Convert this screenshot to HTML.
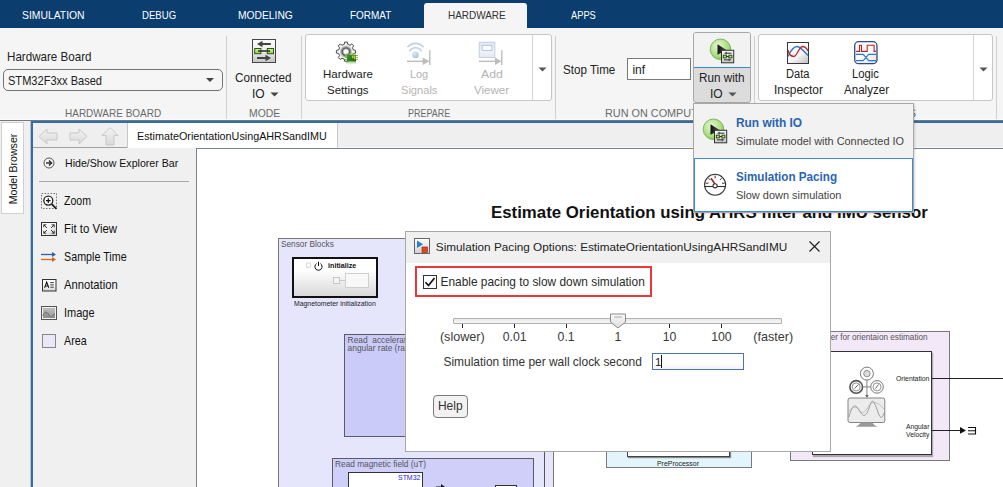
<!DOCTYPE html>
<html><head><meta charset="utf-8"><style>
html,body{margin:0;padding:0;width:1003px;height:487px;overflow:hidden;background:#fff;position:relative}
.a{position:absolute}
.t{position:absolute;white-space:nowrap;line-height:1;font-family:"Liberation Sans", sans-serif}
</style></head><body>
<div class="a" style="left:0px;top:0px;width:1003px;height:28px;background:#0b3d6f"></div>
<div class="a" style="left:424px;top:3px;width:103px;height:26px;background:#f5f5f5;border-radius:3px 3px 0 0"></div>
<div class="t" style="left:21.60px;top:10px;font-size:11.3px;color:#fff;font-weight:normal;transform:scaleX(0.9175);transform-origin:0 0;">SIMULATION</div>
<div class="t" style="left:141.90px;top:10px;font-size:11.3px;color:#fff;font-weight:normal;transform:scaleX(0.8486);transform-origin:0 0;">DEBUG</div>
<div class="t" style="left:237.60px;top:10px;font-size:11.3px;color:#fff;font-weight:normal;transform:scaleX(0.9092);transform-origin:0 0;">MODELING</div>
<div class="t" style="left:350.30px;top:10px;font-size:11.3px;color:#fff;font-weight:normal;transform:scaleX(0.8813);transform-origin:0 0;">FORMAT</div>
<div class="t" style="left:448.30px;top:10px;font-size:11.3px;color:#333;font-weight:normal;transform:scaleX(0.8810);transform-origin:0 0;">HARDWARE</div>
<div class="t" style="left:570.60px;top:10px;font-size:11.3px;color:#fff;font-weight:normal;transform:scaleX(0.8226);transform-origin:0 0;">APPS</div>
<div class="a" style="left:0px;top:28px;width:1003px;height:91px;background:#f5f5f5"></div>
<div class="a" style="left:226px;top:36px;width:1px;height:83px;background:#d0d0d0"></div>
<div class="a" style="left:301px;top:36px;width:1px;height:83px;background:#d0d0d0"></div>
<div class="a" style="left:555px;top:36px;width:1px;height:83px;background:#d0d0d0"></div>
<div class="a" style="left:754px;top:36px;width:1px;height:83px;background:#d0d0d0"></div>
<div class="a" style="left:996px;top:36px;width:1px;height:83px;background:#d0d0d0"></div>
<div class="t" style="left:65.20px;top:108px;font-size:11.2px;color:#6a6a6a;font-weight:normal;transform:scaleX(0.8929);transform-origin:0 0;">HARDWARE BOARD</div>
<div class="t" style="left:248.80px;top:108px;font-size:11.2px;color:#6a6a6a;font-weight:normal;transform:scaleX(0.9286);transform-origin:0 0;">MODE</div>
<div class="t" style="left:407.70px;top:108px;font-size:11.2px;color:#6a6a6a;font-weight:normal;transform:scaleX(0.8027);transform-origin:0 0;">PREPARE</div>
<div class="t" style="left:604.80px;top:108px;font-size:11.2px;color:#6a6a6a;font-weight:normal;transform:scaleX(0.9697);transform-origin:0 0;">RUN ON COMPUTER</div>
<div class="t" style="left:828.00px;top:108px;font-size:11.2px;color:#6a6a6a;font-weight:normal;transform:scaleX(0.8968);transform-origin:0 0;">REVIEW RESULTS</div>
<div class="t" style="left:6.60px;top:51px;font-size:12.2px;color:#222;font-weight:normal;transform:scaleX(0.9524);transform-origin:0 0;">Hardware Board</div>
<div class="a" style="left:3px;top:69px;width:220px;height:22px;background:#f6f6f6;border:1px solid #727272;border-radius:5px;box-sizing:border-box"></div>
<div class="t" style="left:7.90px;top:75px;font-size:12.2px;color:#222;font-weight:normal;transform:scaleX(0.9071);transform-origin:0 0;">STM32F3xx Based</div>
<svg class="a" style="left:205px;top:77px" width="10" height="6"><path d="M1,1 L9,1 L5,5 Z" fill="#444"/></svg>
<div class="t" style="left:235.40px;top:72px;font-size:12px;color:#222;font-weight:normal;transform:scaleX(0.9734);transform-origin:0 0;">Connected</div>
<div class="t" style="left:252.00px;top:88px;font-size:12px;color:#222;font-weight:normal;">IO</div>
<svg class="a" style="left:269.5px;top:92px" width="9" height="5"><path d="M0.5,0.5 L8.5,0.5 L4.5,4.5 Z" fill="#444"/></svg>
<svg class="a" style="left:252px;top:39px" width="24" height="24" viewBox="0 0 24 24">
<defs><linearGradient id="gio" x1="0" y1="0" x2="0" y2="1"><stop offset="0" stop-color="#fcfcfc"/><stop offset="0.5" stop-color="#ececec"/><stop offset="1" stop-color="#c4c4c4"/></linearGradient>
<linearGradient id="ggr" x1="0" y1="0" x2="0" y2="1"><stop offset="0" stop-color="#d8f7a0"/><stop offset="1" stop-color="#8ccc48"/></linearGradient></defs>
<rect x="0.5" y="0.5" width="23" height="23" fill="url(#gio)" stroke="#454545"/>
<path d="M9,5 H18.8" stroke="#444" stroke-width="2"/><path d="M5,5 L10.5,1.8 L10.5,8.2 Z" fill="#444"/>
<path d="M5,19 H14.5" stroke="#444" stroke-width="2"/><path d="M19,19 L13.5,15.8 L13.5,22.2 Z" fill="#444"/>
<rect x="2.7" y="9.5" width="6.2" height="5.2" fill="url(#ggr)" stroke="#2a5a10" stroke-width="1"/>
<rect x="15.3" y="9.5" width="6.2" height="5.2" fill="url(#ggr)" stroke="#2a5a10" stroke-width="1"/>
<path d="M6,12 H18" stroke="#333" stroke-width="1.6"/>
</svg>
<div class="a" style="left:305px;top:34px;width:247px;height:67px;background:#fff;border:1px solid #c6c6c6;border-radius:3px;box-sizing:border-box"></div>
<div class="a" style="left:532px;top:35px;width:1px;height:65px;background:#d6d6d6"></div>
<svg class="a" style="left:537.5px;top:66.5px" width="9" height="5"><path d="M0.5,0.5 L8.5,0.5 L4.5,4.5 Z" fill="#555"/></svg>
<div class="t" style="left:322.50px;top:69px;font-size:11.8px;color:#222;font-weight:normal;transform:scaleX(0.9755);transform-origin:0 0;">Hardware</div>
<div class="t" style="left:326.80px;top:85px;font-size:11.8px;color:#222;font-weight:normal;transform:scaleX(0.9758);transform-origin:0 0;">Settings</div>
<div class="t" style="left:410.30px;top:69px;font-size:11.8px;color:#b4b4b4;font-weight:normal;transform:scaleX(0.9196);transform-origin:0 0;">Log</div>
<div class="t" style="left:401.30px;top:85px;font-size:11.8px;color:#b4b4b4;font-weight:normal;transform:scaleX(0.9405);transform-origin:0 0;">Signals</div>
<div class="t" style="left:480.50px;top:69px;font-size:11.8px;color:#b4b4b4;font-weight:normal;transform:scaleX(1.0385);transform-origin:0 0;">Add</div>
<div class="t" style="left:474.00px;top:85px;font-size:11.8px;color:#b4b4b4;font-weight:normal;transform:scaleX(0.9760);transform-origin:0 0;">Viewer</div>
<svg class="a" style="left:334px;top:40px" width="26" height="26" viewBox="0 0 26 26">
<defs><radialGradient id="gg" cx="0.5" cy="0.5" r="0.5"><stop offset="0.3" stop-color="#ffffff"/><stop offset="0.55" stop-color="#555"/><stop offset="0.8" stop-color="#bbb"/><stop offset="1" stop-color="#f0f0f0"/></radialGradient>
<linearGradient id="chipg" x1="0" y1="0" x2="1" y2="1"><stop offset="0" stop-color="#3a9a2a"/><stop offset="1" stop-color="#1f5e18"/></linearGradient></defs>
<path d="M19.39,9.93 L21.60,10.33 L21.60,13.07 L19.39,13.47 L18.48,15.67 L19.76,17.52 L17.82,19.46 L15.97,18.18 L13.77,19.09 L13.37,21.30 L10.63,21.30 L10.23,19.09 L8.03,18.18 L6.18,19.46 L4.24,17.52 L5.52,15.67 L4.61,13.47 L2.40,13.07 L2.40,10.33 L4.61,9.93 L5.52,7.73 L4.24,5.88 L6.18,3.94 L8.03,5.22 L10.23,4.31 L10.63,2.10 L13.37,2.10 L13.77,4.31 L15.97,5.22 L17.82,3.94 L19.76,5.88 L18.48,7.73 Z" fill="#f2f2f2" stroke="#3a3a3a" stroke-width="0.9"/>
<circle cx="12" cy="11.7" r="6.6" fill="url(#gg)"/>
<path d="M13,13 v2 M15,13 v2 M17,13 v2 M19,13 v2 M21,13 v2 M13,21.5 v2 M15,21.5 v2 M17,21.5 v2 M19,21.5 v2 M21,21.5 v2 M11,15.5 h2 M11,17.5 h2 M11,19.5 h2 M22,15.5 h2 M22,17.5 h2 M22,19.5 h2" stroke="#6cc040" stroke-width="0.9"/>
<rect x="13" y="15" width="9" height="6.5" fill="url(#chipg)"/>
<rect x="18.2" y="15.6" width="1.3" height="2.6" fill="#f0d820"/><rect x="20.2" y="15.6" width="1.3" height="3.6" fill="#f0d820"/>
</svg>
<svg class="a" style="left:406px;top:41px" width="26" height="26" viewBox="0 0 26 26">
<defs><radialGradient id="ldot" cx="0.4" cy="0.35" r="0.6"><stop offset="0" stop-color="#dce9f6"/><stop offset="1" stop-color="#a9c4e0"/></radialGradient></defs>
<path d="M1.5,6.3 A10,10 0 0 1 17.5,6.3" stroke="#bcd3ea" stroke-width="1.7" fill="none"/>
<path d="M3.4,10.3 A7,7 0 0 1 15.6,10.3" stroke="#bcd3ea" stroke-width="1.7" fill="none"/>
<circle cx="9.5" cy="13.9" r="3.2" fill="url(#ldot)"/>
<path d="M1,20.3 H18" stroke="#bdbdbd" stroke-width="1.4"/>
<path d="M16.6,16.6 L23.6,20.3 L16.6,24 Z" fill="#bdbdbd"/>
<path d="M23.8,9.2 V24" stroke="#bdbdbd" stroke-width="1.4"/>
</svg>
<svg class="a" style="left:478px;top:41px" width="26" height="26" viewBox="0 0 26 26">
<defs><linearGradient id="avg" x1="0" y1="0" x2="0" y2="1"><stop offset="0" stop-color="#dfe8f4"/><stop offset="0.6" stop-color="#eef3f9"/><stop offset="1" stop-color="#e4e8f0"/></linearGradient></defs>
<rect x="1.2" y="1.2" width="15.6" height="15.4" fill="url(#avg)" stroke="#c4cfe0"/>
<rect x="4.1" y="4.4" width="9.8" height="5.1" fill="#f8fbff" stroke="#b8c8dc"/>
<path d="M1,20.3 H18" stroke="#bdbdbd" stroke-width="1.4"/>
<path d="M17,16.6 L23.6,20.3 L17,24 Z" fill="#bdbdbd"/>
<path d="M23.8,9.2 V24" stroke="#bdbdbd" stroke-width="1.4"/>
</svg>
<div class="t" style="left:562.70px;top:64px;font-size:12px;color:#222;font-weight:normal;transform:scaleX(0.9681);transform-origin:0 0;">Stop Time</div>
<div class="a" style="left:627px;top:58px;width:64px;height:22px;background:#fff;border:1px solid #7a7a7a;box-sizing:border-box"></div>
<div class="t" style="left:632.40px;top:64px;font-size:12px;color:#222;font-weight:normal;">inf</div>
<div class="a" style="left:693px;top:32px;width:58px;height:71px;background:#dcdcdc;border:1px solid #a8a8a8;border-radius:3px;box-sizing:border-box"></div>
<div class="a" style="left:694px;top:33px;width:56px;height:34px;background:#f2f2f2;border-radius:2px 2px 0 0"></div>
<div class="a" style="left:694px;top:67px;width:56px;height:1px;background:#3a87d0"></div>
<div class="t" style="left:698.80px;top:72px;font-size:12px;color:#222;font-weight:normal;transform:scaleX(0.9766);transform-origin:0 0;">Run with</div>
<div class="t" style="left:710.00px;top:88px;font-size:12px;color:#222;font-weight:normal;">IO</div>
<svg class="a" style="left:727.5px;top:92px" width="9" height="5"><path d="M0.5,0.5 L8.5,0.5 L4.5,4.5 Z" fill="#555"/></svg>
<svg class="a" style="left:706px;top:36px" width="32" height="30" viewBox="0 0 32 30"><defs><radialGradient id="rga" cx="0.4" cy="0.35" r="0.7"><stop offset="0" stop-color="#eaf8d8"/><stop offset="0.7" stop-color="#a8dc78"/><stop offset="1" stop-color="#7cc050"/></radialGradient>
<linearGradient id="rba" x1="0" y1="0" x2="0" y2="1"><stop offset="0" stop-color="#fafafa"/><stop offset="1" stop-color="#c8c8c8"/></linearGradient>
<linearGradient id="rta" x1="0" y1="0" x2="1" y2="0"><stop offset="0" stop-color="#111"/><stop offset="1" stop-color="#555"/></linearGradient></defs>
<circle cx="14.5" cy="13.3" r="10.3" fill="url(#rga)" stroke="#6aa84f" stroke-width="0.8"/>
<path d="M11.5,8.3 L20.5,14 L11.5,18.8 Z" fill="url(#rta)"/>
<rect x="15.5" y="14.3" width="12.2" height="12.5" fill="url(#rba)" stroke="#333" stroke-width="1"/>
<path d="M19.5,17.2 H25.5" stroke="#555" stroke-width="1.3"/><path d="M18,17.2 L20.8,15.6 L20.8,18.8 Z" fill="#555"/>
<path d="M18,23.8 H24" stroke="#555" stroke-width="1.3"/><path d="M25.5,23.8 L22.7,22.2 L22.7,25.4 Z" fill="#555"/>
<path d="M20,20.5 H23.5" stroke="#222" stroke-width="1"/>
<rect x="17.3" y="19.2" width="3" height="2.7" fill="#b8e878" stroke="#1e4a0a" stroke-width="0.9"/>
<rect x="22.9" y="19.2" width="3" height="2.7" fill="#b8e878" stroke="#1e4a0a" stroke-width="0.9"/></svg>
<div class="a" style="left:758px;top:34px;width:235px;height:67px;background:#fff;border:1px solid #c6c6c6;border-radius:3px;box-sizing:border-box"></div>
<div class="a" style="left:973px;top:35px;width:1px;height:65px;background:#d6d6d6"></div>
<svg class="a" style="left:978.5px;top:66.5px" width="9" height="5"><path d="M0.5,0.5 L8.5,0.5 L4.5,4.5 Z" fill="#555"/></svg>
<div class="t" style="left:786.30px;top:68px;font-size:12px;color:#222;font-weight:normal;transform:scaleX(0.9268);transform-origin:0 0;">Data</div>
<div class="t" style="left:773.50px;top:84px;font-size:12px;color:#222;font-weight:normal;transform:scaleX(0.9908);transform-origin:0 0;">Inspector</div>
<div class="t" style="left:852.30px;top:68px;font-size:12px;color:#222;font-weight:normal;transform:scaleX(0.9410);transform-origin:0 0;">Logic</div>
<div class="t" style="left:843.60px;top:84px;font-size:12px;color:#222;font-weight:normal;transform:scaleX(0.9638);transform-origin:0 0;">Analyzer</div>
<svg class="a" style="left:787px;top:42px" width="22" height="22" viewBox="0 0 22 22">
<defs><linearGradient id="dig" x1="0.2" y1="0.2" x2="0.8" y2="1"><stop offset="0" stop-color="#fff"/><stop offset="0.55" stop-color="#f4f4f4"/><stop offset="1" stop-color="#c8c8c8"/></linearGradient></defs>
<rect x="0.5" y="0.5" width="21" height="21" fill="url(#dig)" stroke="#383838"/>
<path d="M1,14.5 C4,8 7,4.5 10,4.5 C13,4.5 17,9 21,13.5" stroke="#2a78d0" stroke-width="1.3" fill="none"/>
<path d="M1,8 C2,13 4,14.5 7,14.5 C10,14.5 12,4.5 15.5,4.5 C18,4.5 20,7 21,9" stroke="#c02828" stroke-width="1.3" fill="none"/>
</svg>
<svg class="a" style="left:854px;top:41px" width="24" height="24" viewBox="0 0 24 24">
<defs><linearGradient id="lag" x1="0" y1="0" x2="1" y2="1"><stop offset="0" stop-color="#fff"/><stop offset="0.6" stop-color="#fafafa"/><stop offset="1" stop-color="#dcdcdc"/></linearGradient></defs>
<rect x="0.7" y="0.7" width="22.3" height="22" rx="4" fill="url(#lag)" stroke="#2c4a8c" stroke-width="1.3"/>
<path d="M2.1,10.4 H5.5 V4.2 H7.5 V10.4 H13.2 V4.2 H20.1 V10.4 H21.9" stroke="#c02020" stroke-width="1.1" fill="none"/>
<path d="M2,13.4 H9.2 L14.7,19.6 H22 M2,19.6 H9.2 L14.7,13.4 H22" stroke="#2a78d0" stroke-width="1.1" fill="none"/>
</svg>
<div class="a" style="left:0px;top:119px;width:1003px;height:1px;background:#fbfbfb"></div>
<div class="a" style="left:0px;top:120px;width:1003px;height:1px;background:#777"></div>
<div class="a" style="left:0px;top:121px;width:1003px;height:366px;background:#f0f0f0"></div>
<div class="a" style="left:30px;top:121px;width:1px;height:366px;background:#c4bfba"></div>
<div class="a" style="left:31px;top:121px;width:972px;height:2px;background:#2a70b0"></div>
<div class="a" style="left:31px;top:121px;width:2px;height:366px;background:#2a70b0"></div>
<div class="a" style="left:1px;top:122px;width:23px;height:92px;background:#fff;border:1px solid #cfcfcf;box-sizing:border-box"></div>
<div class="t" style="left:-31px;top:161.6px;width:88px;text-align:center;font-size:10.6px;color:#111;transform:rotate(-90deg);line-height:14px">Model Browser</div>
<div class="a" style="left:33px;top:123px;width:970px;height:25px;background:#efefef"></div>
<div class="a" style="left:33px;top:147px;width:94px;height:1px;background:#a0a0a0"></div>
<div class="a" style="left:337px;top:147px;width:666px;height:1px;background:#fafafa"></div>
<div class="a" style="left:127px;top:123px;width:211px;height:25px;background:#fff;border-left:1px solid #c8c8c8;border-right:1px solid #c8c8c8;box-sizing:border-box"></div>
<div class="t" style="left:136.90px;top:130px;font-size:11.6px;color:#111;font-weight:normal;transform:scaleX(0.9292);transform-origin:0 0;">EstimateOrientationUsingAHRSandIMU</div>
<svg class="a" style="left:37px;top:127px" width="84" height="20" viewBox="0 0 84 20">
<defs><linearGradient id="ag" x1="0" y1="0" x2="0" y2="1"><stop offset="0" stop-color="#f4f4f4"/><stop offset="1" stop-color="#d8d8d8"/></linearGradient></defs>
<path d="M2,9.5 L10,2 L10,6 L20,6 L20,13 L10,13 L10,17 Z" fill="url(#ag)" stroke="#c9c9c9"/>
<path d="M50,9.5 L42,2 L42,6 L33,6 L33,13 L42,13 L42,17 Z" fill="url(#ag)" stroke="#c9c9c9"/>
<path d="M73,0.5 L81,8.5 L77,8.5 L77,18 L69,18 L69,8.5 L65,8.5 Z" fill="url(#ag)" stroke="#c9c9c9"/>
</svg>
<div class="a" style="left:33px;top:148px;width:163px;height:339px;background:#f0f0f0"></div>
<div class="t" style="left:64.50px;top:157px;font-size:11.6px;color:#111;font-weight:normal;transform:scaleX(0.9153);transform-origin:0 0;">Hide/Show Explorer Bar</div>
<svg class="a" style="left:43px;top:157px" width="12" height="12" viewBox="0 0 12 12">
<circle cx="6" cy="6" r="5" fill="#f4f4f4" stroke="#555" stroke-width="1"/>
<path d="M3,6 L8,6 M6,3.6 L8.6,6 L6,8.4" stroke="#333" stroke-width="1.4" fill="none"/>
</svg>
<div class="a" style="left:39px;top:181px;width:150px;height:1px;background:#a8a8a8"></div>
<div class="t" style="left:64.00px;top:196px;font-size:11.9px;color:#111;font-weight:normal;transform:scaleX(0.8877);transform-origin:0 0;">Zoom</div>
<div class="t" style="left:64.00px;top:224px;font-size:11.9px;color:#111;font-weight:normal;transform:scaleX(0.9590);transform-origin:0 0;">Fit to View</div>
<div class="t" style="left:64.00px;top:252px;font-size:11.9px;color:#111;font-weight:normal;transform:scaleX(0.9028);transform-origin:0 0;">Sample Time</div>
<div class="t" style="left:64.00px;top:280px;font-size:11.9px;color:#111;font-weight:normal;transform:scaleX(0.9437);transform-origin:0 0;">Annotation</div>
<div class="t" style="left:64.00px;top:308px;font-size:11.9px;color:#111;font-weight:normal;transform:scaleX(0.9253);transform-origin:0 0;">Image</div>
<div class="t" style="left:64.00px;top:336px;font-size:11.9px;color:#111;font-weight:normal;transform:scaleX(0.8988);transform-origin:0 0;">Area</div>
<svg class="a" style="left:41px;top:193px" width="17" height="17" viewBox="0 0 17 17">
<rect x="0.5" y="0.5" width="15" height="15" fill="none" stroke="#777" stroke-dasharray="1.6,1.4"/>
<circle cx="7.3" cy="7.6" r="4.5" fill="#fff" stroke="#222" stroke-width="1.3"/>
<path d="M5,7.6 H9.6 M7.3,5.3 V9.9" stroke="#111" stroke-width="1.2"/>
<path d="M10.5,10.8 L15.5,15.8" stroke="#222" stroke-width="1.9"/>
</svg>
<svg class="a" style="left:41px;top:222px" width="16" height="14" viewBox="0 0 16 14">
<defs><linearGradient id="ftv" x1="0" y1="0" x2="1" y2="1"><stop offset="0" stop-color="#fff"/><stop offset="0.5" stop-color="#f4f4f4"/><stop offset="1" stop-color="#c8c8c8"/></linearGradient></defs>
<rect x="0.5" y="0.5" width="15" height="13" fill="url(#ftv)" stroke="#333"/>
<path d="M2.8,5.3 V2.8 H5.3 M2.8,2.8 L6,6 M13.2,5.3 V2.8 H10.7 M13.2,2.8 L10,6 M2.8,8.7 V11.2 H5.3 M2.8,11.2 L6,8 M13.2,8.7 V11.2 H10.7 M13.2,11.2 L10,8" stroke="#333" stroke-width="1" fill="none"/>
</svg>
<svg class="a" style="left:41px;top:251px" width="16" height="12" viewBox="0 0 16 12">
<path d="M0,3.5 H13" stroke="#2a62a8" stroke-width="1.3"/><path d="M11,1 L15,3.5 L11,6 Z" fill="#2a62a8"/>
<path d="M0,8.5 H13" stroke="#d8641e" stroke-width="1.3"/><path d="M11,6 L15,8.5 L11,11 Z" fill="#d8641e"/>
</svg>
<svg class="a" style="left:42px;top:279px" width="15" height="13" viewBox="0 0 15 13">
<defs><linearGradient id="ann" x1="0" y1="0" x2="0" y2="1"><stop offset="0" stop-color="#fff"/><stop offset="0.6" stop-color="#f6f6f6"/><stop offset="1" stop-color="#cfcfcf"/></linearGradient></defs>
<rect x="0.5" y="0.5" width="13.5" height="11.5" fill="url(#ann)" stroke="#333"/>
<path d="M2.6,8.8 L4.7,3 L6.8,8.8 M3.4,6.9 H6" stroke="#111" stroke-width="1.05" fill="none"/>
<path d="M8.3,3.6 H11.8 M8.3,5.9 H11.8 M8.3,8.2 H11.8" stroke="#222" stroke-width="0.9"/>
</svg>
<svg class="a" style="left:41px;top:306px" width="16" height="14" viewBox="0 0 16 14">
<defs><linearGradient id="img" x1="0" y1="0" x2="0" y2="1"><stop offset="0" stop-color="#bdbdbd"/><stop offset="1" stop-color="#9a9a9a"/></linearGradient></defs>
<rect x="0.5" y="0.5" width="15" height="13" fill="#f0f0f0" stroke="#555"/>
<rect x="2" y="2" width="12" height="10" fill="url(#img)"/>
<path d="M2,10 C3.5,5 6,5 8,9 C9.5,11.5 11,11 12.5,8.5 L14,8 V12 H2 Z" fill="#8a8a8a" opacity="0.6"/>
<path d="M2,10 C3.5,5 6,5 8,9 C9.5,11.5 11,11 12.5,8.5 L14,8" stroke="#666" stroke-width="0.9" fill="none"/>
</svg>
<div class="a" style="left:42px;top:334px;width:14px;height:14px;background:#e8e8f8;border:1px solid #888;box-sizing:border-box"></div>
<div class="a" style="left:196px;top:148px;width:807px;height:339px;background:#fff;border-left:1px solid #7a8490;border-top:1px solid #7a8490;box-sizing:border-box"></div>
<div class="t" style="left:491.00px;top:205px;font-size:16.8px;color:#111;font-weight:bold;transform:scaleX(1.0022);transform-origin:0 0;">Estimate Orientation using AHRS filter and IMU sensor</div>
<div class="a" style="left:278px;top:238px;width:276px;height:260px;background:#e5e5fb;border:1px solid #7a7a7a;box-sizing:border-box"></div>
<div class="t" style="left:281.10px;top:241px;font-size:8.2px;color:#555;font-weight:normal;transform:scaleX(1.0093);transform-origin:0 0;">Sensor Blocks</div>
<div class="a" style="left:292px;top:257px;width:86px;height:41px;background:linear-gradient(#ffffff 30%,#d8d8d8);border:2px solid #111;box-sizing:border-box"></div>
<div class="t" style="left:328.00px;top:262px;font-size:7.2px;color:#111;font-weight:bold;">initialize</div>
<svg class="a" style="left:305px;top:261px" width="20" height="12" viewBox="0 0 20 12">
<rect x="1.5" y="2" width="4" height="4.2" fill="#fff" stroke="#c8c8c8" stroke-width="0.7"/>
<path d="M11.6,2.6 A3.6,3.6 0 1 0 15.4,2.6" stroke="#111" stroke-width="1" fill="none"/><path d="M13.5,0.8 V5" stroke="#111" stroke-width="1"/>
</svg>
<svg class="a" style="left:330px;top:272px" width="40" height="18" viewBox="0 0 40 18">
<rect x="3.5" y="5.5" width="6" height="6" fill="#f4f4f4" stroke="#c8c8c8"/>
<path d="M9.5,8.5 H15" stroke="#c8c8c8"/>
<rect x="15.5" y="1.5" width="23" height="14" fill="#f8f8f8" stroke="#d0d0d0"/>
</svg>
<div class="t" style="left:294.00px;top:300px;font-size:7.4px;color:#222;font-weight:normal;transform:scaleX(0.9293);transform-origin:0 0;">Magnetometer initialization</div>
<div class="a" style="left:344px;top:334px;width:62px;height:103px;background:#cbcbfa;border:1px solid #5a5a6a;box-sizing:border-box"></div>
<div class="t" style="left:347.60px;top:336px;font-size:8.4px;color:#555;font-weight:normal;">Read&nbsp; accelerat</div>
<div class="t" style="left:347.60px;top:344px;font-size:8.4px;color:#555;font-weight:normal;">angular rate (ra</div>
<div class="a" style="left:544px;top:420px;width:1px;height:67px;background:#555"></div>
<div class="a" style="left:332px;top:458px;width:202px;height:40px;background:#cfcffa;border:1px solid #5a5a6a;box-sizing:border-box"></div>
<div class="t" style="left:335.00px;top:460px;font-size:8.4px;color:#555;font-weight:normal;transform:scaleX(0.9927);transform-origin:0 0;">Read magnetic field (uT)</div>
<div class="a" style="left:348px;top:472px;width:75px;height:20px;background:#fff;border:1px solid #333;box-sizing:border-box"></div>
<div class="t" style="left:397.70px;top:474px;font-size:7.6px;color:#2222e0;font-weight:normal;transform:scaleX(0.9145);transform-origin:0 0;">STM32</div>
<svg class="a" style="left:436px;top:482px" width="10" height="6"><path d="M0,5 H6" stroke="#111"/><path d="M5,2 L9,5 L5,8 Z" fill="#111"/></svg>
<div class="a" style="left:495px;top:485px;width:22px;height:5px;background:#fff;border:1px solid #333;box-sizing:border-box"></div>
<div class="a" style="left:606px;top:440px;width:146px;height:28px;background:#e2f4fc;border:1px solid #7a7a7a;box-sizing:border-box"></div>
<div class="a" style="left:627px;top:440px;width:103px;height:17px;background:#fff;border:1px solid #444;border-top:none;box-sizing:border-box;box-shadow:1px 1px 1px #888"></div>
<div class="t" style="left:657.00px;top:460px;font-size:7.4px;color:#222;font-weight:normal;transform:scaleX(0.9369);transform-origin:0 0;">PreProcessor</div>
<div class="a" style="left:790px;top:331px;width:160px;height:130px;background:#f3e8f8;border:1px solid #7a7a7a;box-sizing:border-box"></div>
<div class="t" style="left:797.45px;top:334px;font-size:8.2px;color:#555;font-weight:normal;">AHRS filter for orientaion estimation</div>
<div class="a" style="left:812px;top:351px;width:120px;height:104px;background:#fff;border:1px solid #333;box-sizing:border-box;box-shadow:1px 2px 1px #aaa"></div>
<div class="t" style="left:895.70px;top:375px;font-size:7px;color:#1a1a1a;font-weight:normal;transform:scaleX(0.9754);transform-origin:0 0;">Orientation</div>
<div class="t" style="left:905.60px;top:423px;font-size:7px;color:#1a1a1a;font-weight:normal;transform:scaleX(0.9698);transform-origin:0 0;">Angular</div>
<div class="t" style="left:905.60px;top:431px;font-size:7px;color:#1a1a1a;font-weight:normal;transform:scaleX(0.9701);transform-origin:0 0;">Velocity</div>
<div class="a" style="left:932px;top:378px;width:71px;height:1px;background:#222"></div>
<div class="a" style="left:932px;top:430px;width:30px;height:1px;background:#222"></div>
<svg class="a" style="left:958px;top:424px" width="20" height="12" viewBox="0 0 20 12">
<path d="M2,3 L8,6.4 L2,9.8 Z" fill="#111"/>
<path d="M10,3.5 H17.5 V10 H10 M10,6.75 H17.5" stroke="#111" stroke-width="1.1" fill="none"/>
</svg>
<svg class="a" style="left:846px;top:365px" width="42" height="64" viewBox="0 0 42 64">
<circle cx="20.9" cy="8.6" r="6.5" fill="#fff" stroke="#666" stroke-width="0.9"/><circle cx="20.9" cy="8.6" r="3.2" fill="#ddd" stroke="#777" stroke-width="0.8"/>
<circle cx="10.2" cy="21.9" r="6.3" fill="#fff" stroke="#555" stroke-width="1.6"/><circle cx="10.2" cy="21.9" r="4" fill="#fff" stroke="#777" stroke-width="0.8"/><path d="M8.5,23.5 L12.5,19.5" stroke="#555" stroke-width="0.9"/>
<circle cx="31" cy="21.9" r="6.3" fill="#fff" stroke="#666" stroke-width="0.9"/><circle cx="31" cy="21.9" r="4" fill="#fff" stroke="#777" stroke-width="0.8"/><path d="M29.5,23.5 L32.5,19.5" stroke="#555" stroke-width="0.9"/>
<path d="M20.9,15.1 V32 M16.5,21.9 H24.7" stroke="#777" stroke-width="0.9"/><path d="M19.2,30 L20.9,33 L22.6,30 Z" fill="#666"/>
<rect x="2" y="33" width="36.8" height="24.5" rx="2" fill="#ececec" stroke="#777" stroke-width="0.9"/>
<path d="M3,52 C6,40 9,38 13,45 C17,52 20,54 24,40 C27,30 30,42 33,50 C35,54 37,52 38,48" stroke="#888" fill="none" stroke-width="0.8"/>
<path d="M3,46 C7,42 10,40 14,46 C18,52 22,40 26,38 C30,36 34,40 38,44" stroke="#aaa" fill="none" stroke-width="0.7"/>
<path d="M15,57.5 L26,57.5 L29,60.5 L31.5,61.8 L9.5,61.8 L12,60.5 Z" fill="#999"/>
</svg>
<div class="a" style="left:693px;top:103px;width:221px;height:110px;background:#f2f2f2;border:1px solid #a8a8a8;box-sizing:border-box;box-shadow:1px 1px 2px rgba(0,0,0,0.15)"></div>
<div class="a" style="left:694px;top:158px;width:219px;height:54px;background:#fff;border:1px solid #3d8ad6;box-sizing:border-box"></div>
<div class="t" style="left:735.70px;top:117px;font-size:12.2px;color:#2a64b4;font-weight:bold;transform:scaleX(0.9753);transform-origin:0 0;">Run with IO</div>
<div class="t" style="left:735.90px;top:135px;font-size:11.6px;color:#444;font-weight:normal;transform:scaleX(0.9412);transform-origin:0 0;">Simulate model with Connected IO</div>
<div class="t" style="left:735.70px;top:171px;font-size:12.2px;color:#2a64b4;font-weight:bold;transform:scaleX(0.9560);transform-origin:0 0;">Simulation Pacing</div>
<div class="t" style="left:735.70px;top:189px;font-size:11.6px;color:#444;font-weight:normal;transform:scaleX(0.9458);transform-origin:0 0;">Slow down simulation</div>
<svg class="a" style="left:699px;top:116px" width="32" height="30" viewBox="0 0 32 30"><defs><radialGradient id="rgb" cx="0.4" cy="0.35" r="0.7"><stop offset="0" stop-color="#eaf8d8"/><stop offset="0.7" stop-color="#a8dc78"/><stop offset="1" stop-color="#7cc050"/></radialGradient>
<linearGradient id="rbb" x1="0" y1="0" x2="0" y2="1"><stop offset="0" stop-color="#fafafa"/><stop offset="1" stop-color="#c8c8c8"/></linearGradient>
<linearGradient id="rtb" x1="0" y1="0" x2="1" y2="0"><stop offset="0" stop-color="#111"/><stop offset="1" stop-color="#555"/></linearGradient></defs>
<circle cx="14.5" cy="13.3" r="10.3" fill="url(#rgb)" stroke="#6aa84f" stroke-width="0.8"/>
<path d="M11.5,8.3 L20.5,14 L11.5,18.8 Z" fill="url(#rtb)"/>
<rect x="15.5" y="14.3" width="12.2" height="12.5" fill="url(#rbb)" stroke="#333" stroke-width="1"/>
<path d="M19.5,17.2 H25.5" stroke="#555" stroke-width="1.3"/><path d="M18,17.2 L20.8,15.6 L20.8,18.8 Z" fill="#555"/>
<path d="M18,23.8 H24" stroke="#555" stroke-width="1.3"/><path d="M25.5,23.8 L22.7,22.2 L22.7,25.4 Z" fill="#555"/>
<path d="M20,20.5 H23.5" stroke="#222" stroke-width="1"/>
<rect x="17.3" y="19.2" width="3" height="2.7" fill="#b8e878" stroke="#1e4a0a" stroke-width="0.9"/>
<rect x="22.9" y="19.2" width="3" height="2.7" fill="#b8e878" stroke="#1e4a0a" stroke-width="0.9"/></svg>
<svg class="a" style="left:703px;top:173px" width="25" height="25" viewBox="0 0 25 25">
<circle cx="12.1" cy="11.8" r="10.5" fill="#fff" stroke="#333" stroke-width="1.1"/>
<path d="M1.6,13.5 H22.6" stroke="#333" stroke-width="1.1"/>
<path d="M12.1,2.5 V5.3 M5.5,5.2 L7.3,7 M18.7,5.2 L16.9,7 M2.8,10.2 H5.5 M19,10.2 H21.6" stroke="#333" stroke-width="1"/>
<path d="M8,5.2 L12,11" stroke="#b01818" stroke-width="1.5"/>
<circle cx="12.1" cy="12.8" r="2.1" fill="#fff" stroke="#333" stroke-width="1.1"/>
</svg>
<div class="a" style="left:405px;top:231px;width:426px;height:221px;background:#fff;border:1px solid #a8a8a8;box-sizing:border-box"></div>
<div class="a" style="left:406px;top:232px;width:424px;height:31px;background:#f0f0f0"></div>
<div class="t" style="left:435.80px;top:241px;font-size:11.75px;color:#222;font-weight:normal;">Simulation Pacing Options: EstimateOrientationUsingAHRSandIMU</div>
<svg class="a" style="left:809px;top:241px" width="11" height="11" viewBox="0 0 11 11">
<path d="M0.5,0.5 L10.5,10.5 M10.5,0.5 L0.5,10.5" stroke="#222" stroke-width="1.2"/></svg>
<svg class="a" style="left:414px;top:238px" width="16" height="16" viewBox="0 0 16 16">
<defs><linearGradient id="dg" x1="0" y1="0" x2="0" y2="1"><stop offset="0" stop-color="#fff"/><stop offset="1" stop-color="#d0d0d0"/></linearGradient></defs>
<rect x="0.5" y="0.5" width="15" height="15" fill="url(#dg)" stroke="#666"/>
<path d="M3,2.5 L3,10 L9,6.25 Z" fill="#2a80d0"/>
<rect x="8" y="9" width="5.5" height="5.5" fill="#e04a20" stroke="#902010" stroke-width="0.6"/>
</svg>
<div class="a" style="left:415px;top:266px;width:237px;height:31px;border:2.5px solid #e8383a;box-sizing:border-box"></div>
<div class="a" style="left:423px;top:275px;width:14px;height:14px;background:#fff;border:1px solid #333;box-sizing:border-box"></div>
<svg class="a" style="left:423px;top:275px" width="14" height="14" viewBox="0 0 14 14"><path d="M2.5,7.2 L5.5,10.5 L11.5,3" stroke="#111" stroke-width="1.7" fill="none"/></svg>
<div class="t" style="left:440.50px;top:277px;font-size:11.9px;color:#2a2a2a;font-weight:normal;">Enable pacing to slow down simulation</div>
<div class="a" style="left:453px;top:318px;width:329px;height:6px;background:linear-gradient(#e8e8e8,#f8f8f8);border:1px solid #b0b0b0;border-radius:1px;box-sizing:border-box"></div>
<div class="a" style="left:462px;top:324px;width:1px;height:4px;background:#222"></div>
<div class="a" style="left:514px;top:324px;width:1px;height:4px;background:#222"></div>
<div class="a" style="left:566px;top:324px;width:1px;height:4px;background:#222"></div>
<div class="a" style="left:617px;top:324px;width:1px;height:4px;background:#222"></div>
<div class="a" style="left:669px;top:324px;width:1px;height:4px;background:#222"></div>
<div class="a" style="left:721px;top:324px;width:1px;height:4px;background:#222"></div>
<svg class="a" style="left:609px;top:313px" width="18" height="16" viewBox="0 0 18 16">
<defs><linearGradient id="sg" x1="0" y1="0" x2="0" y2="1"><stop offset="0" stop-color="#fafafa"/><stop offset="1" stop-color="#dcdcdc"/></linearGradient></defs>
<path d="M1.5,1 H16.5 V9 L9,15 L1.5,9 Z" fill="url(#sg)" stroke="#8a8a8a"/>
<path d="M5,4 H13" stroke="#aaa"/></svg>
<div class="t" style="left:439.90px;top:331px;font-size:12.6px;color:#3a3a3a;font-weight:normal;">(slower)</div>
<div class="t" style="left:502.63px;top:331px;font-size:12.3px;color:#3a3a3a;font-weight:normal;">0.01</div>
<div class="t" style="left:557.55px;top:331px;font-size:12.3px;color:#3a3a3a;font-weight:normal;">0.1</div>
<div class="t" style="left:614.38px;top:331px;font-size:12.3px;color:#3a3a3a;font-weight:normal;">1</div>
<div class="t" style="left:662.66px;top:331px;font-size:12.3px;color:#3a3a3a;font-weight:normal;">10</div>
<div class="t" style="left:711.14px;top:331px;font-size:12.3px;color:#3a3a3a;font-weight:normal;">100</div>
<div class="t" style="left:753.25px;top:331px;font-size:12.6px;color:#3a3a3a;font-weight:normal;">(faster)</div>
<div class="t" style="left:443.50px;top:357px;font-size:11.95px;color:#333;font-weight:normal;">Simulation time per wall clock second</div>
<div class="a" style="left:652px;top:353px;width:92px;height:17px;background:linear-gradient(#fff,#fff 60%,#f4f4f4);border:1px solid #4a74b0;box-sizing:border-box"></div>
<div class="t" style="left:655.00px;top:357px;font-size:11.5px;color:#222;font-weight:normal;">1</div>
<div class="a" style="left:661px;top:355px;width:1px;height:13px;background:#111"></div>
<div class="a" style="left:433px;top:395px;width:35px;height:23px;background:#f2f2f2;border:1px solid #7a7a7a;border-radius:4px;box-sizing:border-box"></div>
<div class="t" style="left:437.96px;top:400px;font-size:12px;color:#333;font-weight:normal;">Help</div>
</body></html>
